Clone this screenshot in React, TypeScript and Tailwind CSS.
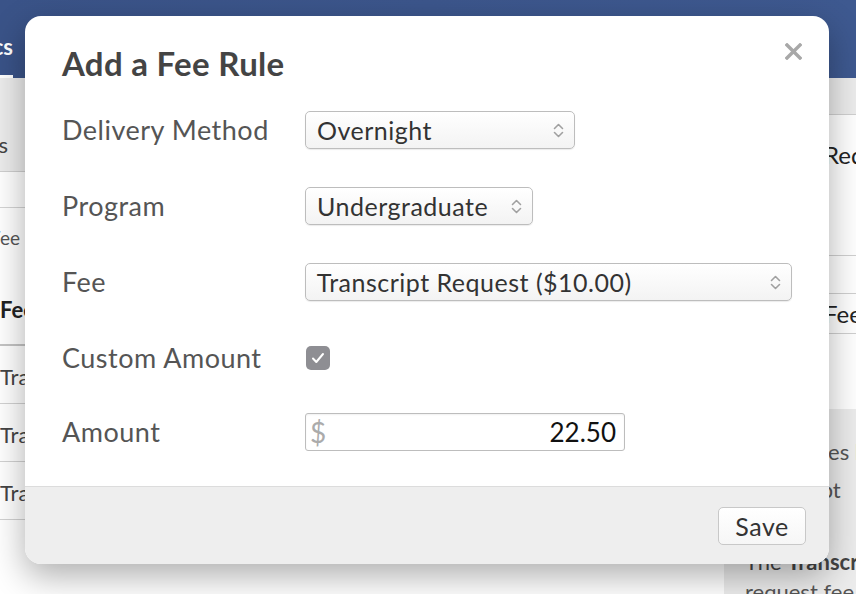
import React from "react";

const rows = ["Transcript Request", "Transcript Request", "Transcript Request"];

function Chevrons() {
  return (
    <svg width="11" height="17" viewBox="0 0 11 17" fill="none" className="shrink-0">
      <path d="M1.5 6.5 5.5 2.5l4 4" stroke="#a0a0a0" strokeWidth="1.6" strokeLinecap="round" strokeLinejoin="round" />
      <path d="M1.5 10.5 5.5 14.5l4-4" stroke="#a0a0a0" strokeWidth="1.6" strokeLinecap="round" strokeLinejoin="round" />
    </svg>
  );
}

function SelectBox({ value, width }: { value: string; width: string }) {
  return (
    <div
      className={`${width} flex h-[38px] items-center justify-between rounded-[5px] border border-[#bdbdbd] bg-[linear-gradient(#ffffff,#f3f3f3)] pl-[11px] pr-[10px] shadow-[0_1px_1px_rgba(0,0,0,0.08)]`}
    >
      <span className="text-[25px] leading-none tracking-[0.5px] text-[#333]">{value}</span>
      <Chevrons />
    </div>
  );
}

function FieldRow({ label, children }: { label: string; children: React.ReactNode }) {
  return (
    <div className="flex h-[38px] items-center">
      <div className="w-[243px] text-[27px] leading-[38px] tracking-[0.5px] text-[#555]">{label}</div>
      {children}
    </div>
  );
}

function BackgroundPage() {
  return (
    <div className="flex h-full flex-col bg-white">
      <div className="flex h-[78px] shrink-0 items-end bg-[linear-gradient(90deg,#3a5388,#3e5990)]">
        <div className="flex w-[13px] justify-end">
          <div className="whitespace-nowrap border-b-[3px] border-white pb-[12px] text-[22px] font-bold text-white">
            Statistics
          </div>
        </div>
      </div>
      <div className="flex flex-1">
        <div className="w-[724px] shrink-0">
          <div className="flex h-[94px] items-center border-b border-[#cfcfcf] bg-[#ececec] pt-[40px]">
            <div className="flex w-[8px] justify-end">
              <span className="whitespace-nowrap text-[22px] text-[#444]">Fee Rules</span>
            </div>
          </div>
          <div className="h-[36px] border-b border-[#d4d4d4]" />
          <div className="-ml-[10px] pt-[16px] text-[19px] text-[#555]">Fee lookup rules applied to requests.</div>
          <div className="mt-[40px] border-b-2 border-[#c4c4c4] pb-[18px] text-[22px] font-bold text-[#222]">Fee</div>
          {rows.map((r, i) => (
            <div key={i} className="flex h-[58px] items-center border-b border-[#d2d2d2] pt-[4px] text-[22px] text-[#444]">
              {r}
            </div>
          ))}
        </div>
        <div className="flex-1">
          <div className="flex h-[37px] items-end border-b border-[#d0d0d0] bg-[#ececec]" />
          <div className="pl-[100px] pt-[22px] text-[24px] text-[#222]">Requests</div>
          <div className="mt-[82px] h-[39px] border-y border-[#d0d0d0]" />
          <div className="flex h-[40px] items-center border-b border-[#d0d0d0] pl-[100px] text-[24px] text-[#222]">Fee</div>
          <div className="mt-[75px] bg-[#ececec] pl-[21px] pt-[24px] text-[22px] leading-[38px] text-[#555]">
            <div className="pl-[60px]">Fees list</div>
            <div className="pl-[40px]">Script</div>
            <div className="mt-[34px] text-[#444]">
              The <span className="font-bold">Transcript</span>
            </div>
            <div className="-mt-[8px]">request fee</div>
          </div>
        </div>
      </div>
    </div>
  );
}

export default function App() {
  return (
    <div className="relative h-[594px] w-[856px] overflow-hidden font-['Lato',sans-serif]">
      <BackgroundPage />

      <div className="absolute left-[25px] top-[16px] w-[804px] overflow-hidden rounded-[16px] bg-white shadow-[0_12px_34px_rgba(0,0,0,0.32)]">
        <div className="relative px-[37px] pb-[35px] pt-[27px]">
          <button type="button" className="absolute right-[27px] top-[27px] p-0">
            <svg width="17" height="17" viewBox="0 0 17 17">
              <path d="M2 2 15 15M15 2 2 15" stroke="#a8a8a8" strokeWidth="3.4" strokeLinecap="square" />
            </svg>
          </button>
          <h2 className="text-[33px] font-bold leading-[40px] tracking-[0.3px] text-[#444]">Add a Fee Rule</h2>

          <div className="mt-[28px] flex flex-col gap-[38px]">
            <FieldRow label="Delivery Method">
              <SelectBox value="Overnight" width="w-[270px]" />
            </FieldRow>
            <FieldRow label="Program">
              <SelectBox value="Undergraduate" width="w-[228px]" />
            </FieldRow>
            <FieldRow label="Fee">
              <SelectBox value="Transcript Request ($10.00)" width="w-[488px]" />
            </FieldRow>
            <FieldRow label="Custom Amount">
              <div className="ml-[1px] flex h-[24px] w-[24px] items-center justify-center rounded-[5px] bg-[#8e8e93]">
                <svg width="14" height="12" viewBox="0 0 14 12" fill="none">
                  <path d="M2 6.5 5.3 10 12 2" stroke="white" strokeWidth="2" strokeLinecap="round" strokeLinejoin="round" />
                </svg>
              </div>
            </FieldRow>
            <div className="-mt-[2px]">
              <FieldRow label="Amount">
                <div className="flex h-[38px] w-[320px] items-center justify-between rounded-[3px] border border-[#bdbdbd] bg-white pl-[4px] pr-[8px] shadow-[inset_0_1px_2px_rgba(0,0,0,0.06)]">
                  <span className="text-[28px] leading-none text-[#ababab]">$</span>
                  <span className="text-[26px] leading-none text-[#111]">22.50</span>
                </div>
              </FieldRow>
            </div>
          </div>
        </div>

        <div className="flex h-[78px] items-center justify-end border-t border-[#dcdcdc] bg-[#eeeeee] pr-[23px]">
          <button
            type="button"
            className="h-[38px] w-[88px] rounded-[5px] border border-[#c8c8c8] bg-[linear-gradient(#ffffff,#f6f6f6)] text-[25px] tracking-[0.5px] text-[#333]"
          >
            Save
          </button>
        </div>
      </div>
    </div>
  );
}
